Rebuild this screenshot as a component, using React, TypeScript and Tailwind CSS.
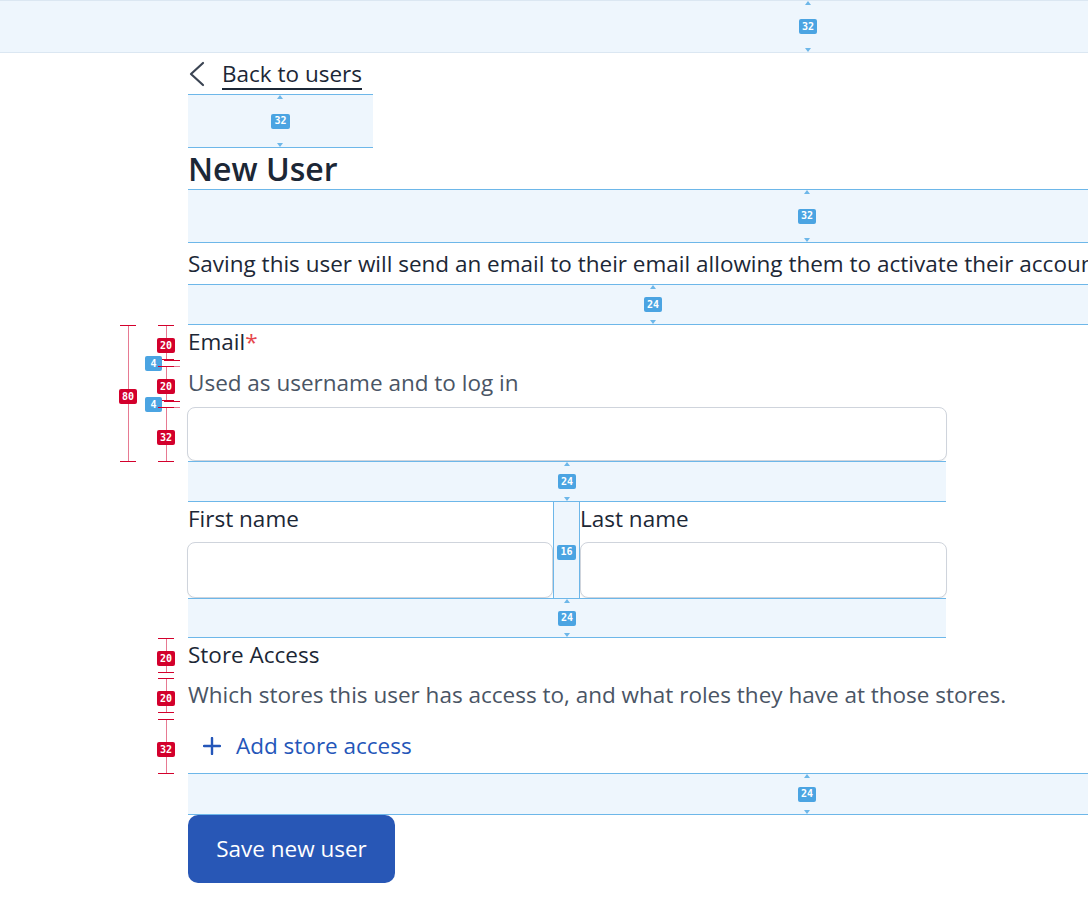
import React from "react";

const FONT = { fontFamily: "'Open Sans', 'Noto Sans', sans-serif" };

function Badge({ n, red }: { n: string; red?: boolean }) {
  return (
    <span
      className={
        "inline-flex items-center justify-center h-[15px] px-[3px] min-w-[17px] rounded-[2px] text-[10px] font-bold leading-none text-white " +
        (red ? "bg-[#d3002c]" : "bg-[#4ba4e2]")
      }
      style={{ fontFamily: "'DejaVu Sans Mono', monospace" }}
    >
      {n}
    </span>
  );
}

function Tri({ down }: { down?: boolean }) {
  return (
    <svg width="6" height="4" viewBox="0 0 6 4" className="block">
      {down ? <polygon points="0,0 6,0 3,4" fill="#6db7e9" /> : <polygon points="0,4 6,4 3,0" fill="#6db7e9" />}
    </svg>
  );
}

function Band({ className, badgeClass, n }: { className: string; badgeClass: string; n: string }) {
  return (
    <div className={"relative bg-[#eef6fd] border-y border-[#6db7e9] flex items-center " + className}>
      <div className={"flex flex-col items-center justify-between h-full " + badgeClass}>
        <Tri />
        <Badge n={n} />
        <Tri down />
      </div>
    </div>
  );
}

function RedMeasure({ className, n }: { className: string; n: string }) {
  return (
    <div className={"absolute w-[16px] flex flex-col items-center " + className}>
      <div className="h-[1px] w-[16px] bg-[#d3002c]" />
      <div className="flex-1 w-[1px] bg-[#e77a92] relative flex items-center justify-center">
        <div className="absolute">
          <Badge n={n} red />
        </div>
      </div>
      <div className="h-[1px] w-[16px] bg-[#d3002c]" />
    </div>
  );
}

function BlueMark({ className }: { className: string }) {
  return (
    <div className={"absolute flex items-center " + className}>
      <Badge n="4" />
      <div className="w-[16px] flex flex-col gap-[5px] ml-[2px]">
        <div className="h-[1px] bg-[#d3002c]" />
        <div className="h-[1px] bg-[#e77a92]" />
      </div>
    </div>
  );
}

function Input({ className }: { className: string }) {
  return (
    <div
      className={
        "rounded-[8px] border-[1.5px] border-[#cfd4dc] bg-white shadow-[0_1px_1px_rgba(0,0,0,0.06)] " + className
      }
    />
  );
}

export default function App() {
  return (
    <div className="relative w-[1088px] h-[923px] overflow-hidden bg-white text-[#1c2736]" style={FONT}>
      <div className="h-[53px] w-full bg-[#eef6fd] border-t border-[#dbe7f2] border-b border-[#6db7e9] flex">
        <div className="flex flex-col items-center justify-between h-full pl-[799px]">
          <Tri />
          <Badge n="32" />
          <Tri down />
        </div>
      </div>

      <div className="pl-[188px] w-[1300px]">
        <div className="h-[41px] flex items-center">
          <svg width="20" height="26" viewBox="0 0 20 26">
            <polyline points="15,2 3,13 15,24" fill="none" stroke="#3b4453" strokeWidth="2.2" strokeLinecap="round" strokeLinejoin="round" />
          </svg>
          <span className="ml-[14px] text-[22.5px] leading-[26px] border-b-2 border-[#1c2736] pb-[1px] mt-[4px]">Back to users</span>
        </div>

        <Band className="h-[54px] w-[185px] justify-center" badgeClass="" n="32" />

        <div className="h-[41px] text-[32px] leading-[41px] font-semibold">New User</div>

        <Band className="h-[54px] w-[1100px]" badgeClass="pl-[610px]" n="32" />

        <div className="h-[41px] text-[22.5px] leading-[41px] whitespace-nowrap">
          Saving this user will send an email to their email allowing them to activate their account.
        </div>

        <Band className="h-[41px] w-[1100px]" badgeClass="pl-[456px]" n="24" />

        <div className="w-[759px]">
          <div className="h-[34px] text-[22.5px] leading-[34px]">
            Email<span className="text-[#e5484d]">*</span>
          </div>
          <div className="mt-[7px] h-[34px] text-[22.5px] leading-[34px] text-[#4a5565]">Used as username and to log in</div>
          <Input className="mt-[7px] h-[54px] -ml-[1px] w-[760px]" />
        </div>

        <Band className="h-[41px] w-[758px] justify-center" badgeClass="" n="24" />

        <div className="flex w-[759px] h-[96px]">
          <div className="w-[365px]">
            <div className="h-[34px] text-[22.5px] leading-[34px]">First name</div>
            <Input className="mt-[6px] h-[56px] -ml-[1px] w-[366px]" />
          </div>
          <div className="w-[27px] h-full bg-[#eef6fd] border-x border-[#6db7e9] flex items-center justify-center pt-[4px]">
            <Badge n="16" />
          </div>
          <div className="flex-1">
            <div className="h-[34px] text-[22.5px] leading-[34px]">Last name</div>
            <Input className="mt-[6px] h-[56px] w-[367px]" />
          </div>
        </div>

        <Band className="h-[40px] w-[758px] justify-center" badgeClass="" n="24" />

        <div>
          <div className="h-[34px] text-[22.5px] leading-[34px]">Store Access</div>
          <div className="mt-[6px] h-[34px] text-[22.5px] leading-[34px] text-[#4a5565]">
            Which stores this user has access to, and what roles they have at those stores.
          </div>
          <div className="mt-[7px] h-[54px] flex items-center pl-[15px] text-[#2456b9]">
            <svg width="18" height="18" viewBox="0 0 18 18">
              <path d="M9 1v16M1 9h16" stroke="#2456b9" strokeWidth="2.4" strokeLinecap="round" />
            </svg>
            <span className="ml-[15px] text-[22.5px]">Add store access</span>
          </div>
        </div>

        <Band className="h-[42px] w-[1100px]" badgeClass="pl-[610px]" n="24" />

        <button className="h-[68px] w-[207px] rounded-[10px] bg-[#2857b6] text-white text-[22.5px] flex items-center justify-center">
          Save new user
        </button>
      </div>

      <RedMeasure className="left-[120px] top-[325px] h-[137px]" n="80" />
      <RedMeasure className="left-[158px] top-[325px] h-[35px]" n="20" />
      <BlueMark className="left-[145px] top-[356px]" />
      <RedMeasure className="left-[158px] top-[366px] h-[35px]" n="20" />
      <BlueMark className="left-[145px] top-[397px]" />
      <RedMeasure className="left-[158px] top-[407px] h-[55px]" n="32" />

      <RedMeasure className="left-[158px] top-[638px] h-[35px]" n="20" />
      <RedMeasure className="left-[158px] top-[678px] h-[35px]" n="20" />
      <RedMeasure className="left-[158px] top-[719px] h-[55px]" n="32" />
    </div>
  );
}
